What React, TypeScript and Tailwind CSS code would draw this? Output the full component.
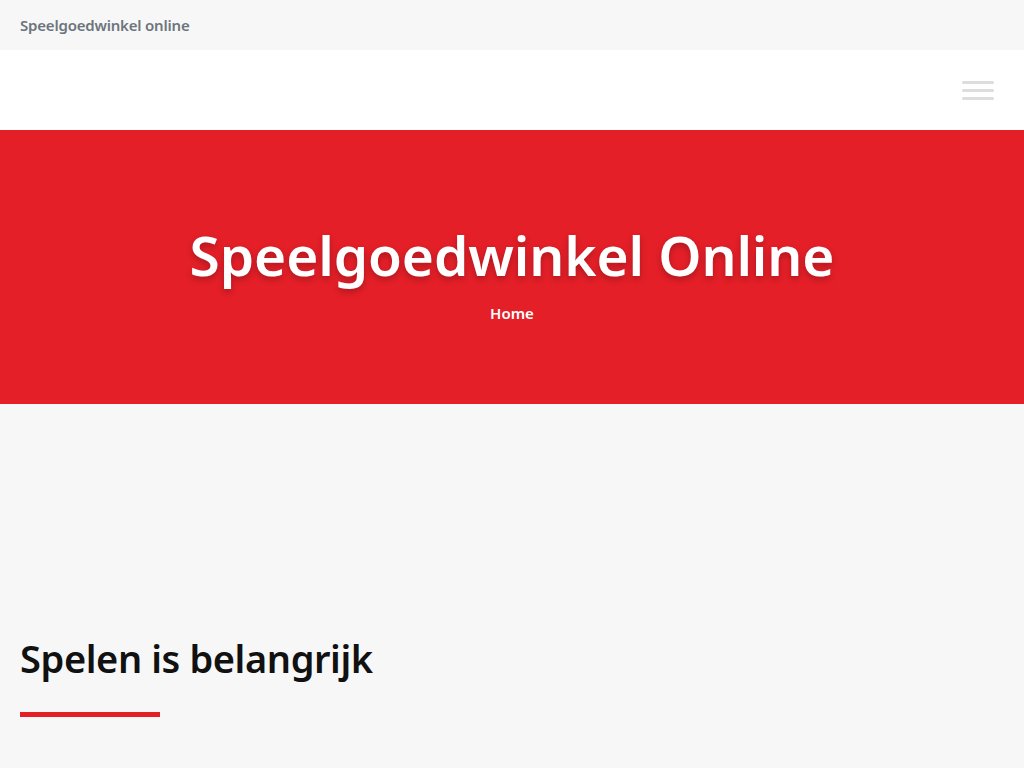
import React from "react";

const font = { fontFamily: '"Noto Sans", "Open Sans", sans-serif' };

const App: React.FC = () => {
  return (
    <div className="min-h-screen bg-[#f7f7f7]" style={font}>
      {/* top bar */}
      <div className="h-[50px] flex items-center px-5 bg-[#f7f7f7]">
        <span className="text-[15px] font-semibold text-[#6c757d] tracking-[-0.2px]">
          Speelgoedwinkel online
        </span>
      </div>

      {/* nav */}
      <div className="h-20 bg-white flex items-center justify-end px-[30px]">
        <button className="flex flex-col gap-[5px] py-1" aria-label="menu">
          <span className="block w-8 h-[3px] bg-[#dddddd] rounded-sm" />
          <span className="block w-8 h-[3px] bg-[#dddddd] rounded-sm" />
          <span className="block w-8 h-[3px] bg-[#dddddd] rounded-sm" />
        </button>
      </div>

      {/* hero */}
      <div className="h-[274px] bg-[#e41f28] flex flex-col items-center justify-center pt-[18px]">
        <h1 className="text-[55px] leading-none font-semibold text-white tracking-[-0.1px] [text-shadow:0_3px_6px_rgba(0,0,0,0.25)]">
          Speelgoedwinkel Online
        </h1>
        <div className="mt-[20px] text-[15px] font-semibold text-white">Home</div>
      </div>

      {/* content */}
      <div className="px-5 pt-[231px]">
        <h2 className="text-[38px] leading-tight font-semibold text-[#111111] tracking-[-0.4px]">
          Spelen is belangrijk
        </h2>
        <div className="mt-[29px] w-[140px] h-[5px] bg-[#e41f28]" />
      </div>
    </div>
  );
};

export default App;
